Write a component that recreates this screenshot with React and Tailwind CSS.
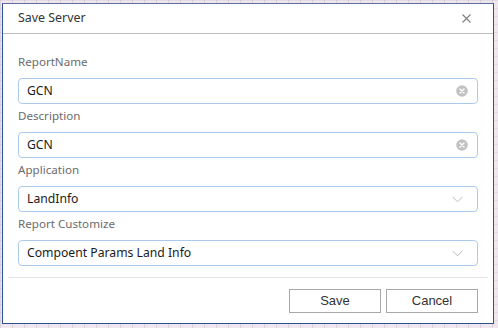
import React from "react";

const font = { fontFamily: '"Noto Sans", "Open Sans", sans-serif' };

function ClearIcon() {
  return (
    <svg width="12" height="12" viewBox="0 0 12 12" className="shrink-0">
      <circle cx="6" cy="6" r="5.8" fill="#c2c2c2" />
      <path d="M4 4 L8 8 M8 4 L4 8" stroke="#fff" strokeWidth="1.4" strokeLinecap="round" />
    </svg>
  );
}

function Chevron() {
  return (
    <svg width="11" height="7" viewBox="0 0 11 7" className="shrink-0">
      <path d="M0.5 0.8 L5.5 5.8 L10.5 0.8" stroke="#bdbdbd" strokeWidth="1" fill="none" />
    </svg>
  );
}

function Field({ label, value, icon }) {
  return (
    <div className="flex flex-col">
      <div className="h-[18px] mb-[7px] text-[11.6px] leading-[18px] text-[#6b6b6b]">{label}</div>
      <div className="h-[26px] mb-[3px] rounded-[4px] border border-[#a9caec] bg-white flex items-center pl-[8px] pr-[9px]">
        <span className="flex-1 text-[12.2px] text-[#1b1b1b] leading-none">{value}</span>
        {icon === "clear" ? <ClearIcon /> : <span className="mr-[5px] flex"><Chevron /></span>}
      </div>
    </div>
  );
}

export default function App() {
  return (
    <div
      className="w-[498px] h-[328px] overflow-hidden bg-[#efe6ee] bg-[linear-gradient(90deg,rgba(160,150,165,0.25)_1px,transparent_1px),linear-gradient(rgba(160,150,165,0.15)_1px,transparent_1px)] bg-[size:12px_12px,12px_8px] pt-[3px] pl-[2px]"
      style={font}
    >
      <div className="w-[492px] h-[321px] bg-white border border-[#2f4f93] border-t-[#5a6fa0] flex flex-col">
        <div className="h-[30px] shrink-0 border-b border-[#bdbdbd] flex items-center pl-[15px] pr-[22px]">
          <span className="flex-1 text-[12.4px] text-[#333] leading-none">Save Server</span>
          <svg width="9" height="9" viewBox="0 0 9 9">
            <path d="M0.5 0.5 L8.5 8.5 M8.5 0.5 L0.5 8.5" stroke="#7d7d7d" strokeWidth="1.1" />
          </svg>
        </div>
        <div className="px-[15px] pt-[19px]">
          <Field label="ReportName" value="GCN" icon="clear" />
          <Field label="Description" value="GCN" icon="clear" />
          <Field label="Application" value="LandInfo" icon="chev" />
          <Field label="Report Customize" value="Compoent Params Land Info" icon="chev" />
        </div>
        <div className="mx-[5px] mt-[8px] border-t border-[#e6e6e6]" />
        <div className="flex justify-end gap-[5px] px-[15px] pt-[11px]">
          <button
            className="w-[92px] h-[24px] border border-[#a8a8a8] bg-white text-[13px] text-[#333]"
            style={{ fontFamily: '"Liberation Sans", Arial, sans-serif' }}
          >
            Save
          </button>
          <button
            className="w-[92px] h-[24px] border border-[#a8a8a8] bg-white text-[13px] text-[#333]"
            style={{ fontFamily: '"Liberation Sans", Arial, sans-serif' }}
          >
            Cancel
          </button>
        </div>
      </div>
    </div>
  );
}
